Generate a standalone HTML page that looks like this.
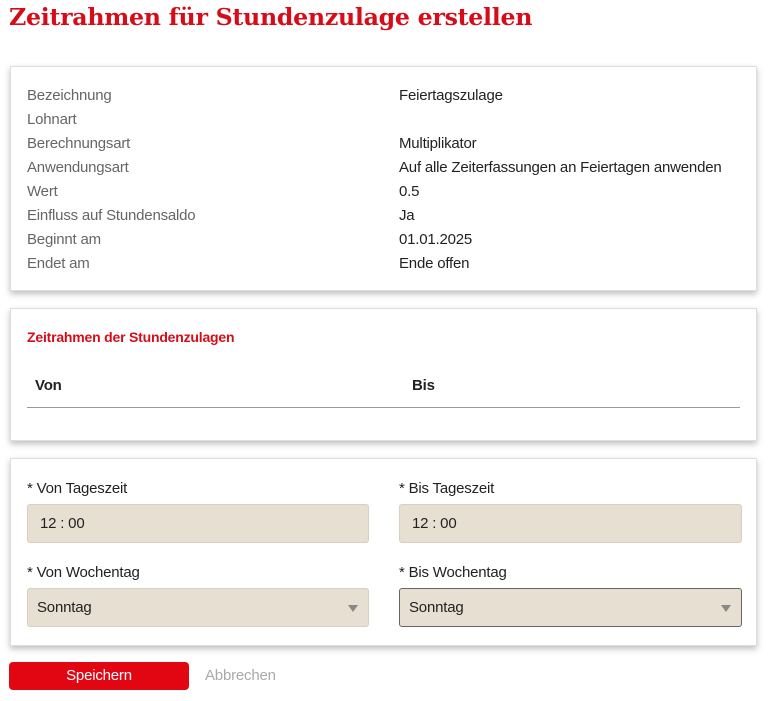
<!DOCTYPE html>
<html><head><meta charset="utf-8"><style>
*{box-sizing:border-box;margin:0;padding:0}
body{width:768px;height:701px;background:#fff;font-family:"Liberation Sans",sans-serif;font-size:15px;letter-spacing:-0.2px;color:#222;position:relative;overflow:hidden}
h1{position:absolute;left:9px;top:3px;font-family:"DejaVu Serif","Liberation Serif",serif;font-weight:bold;color:#d70c19;font-size:23.7px;letter-spacing:-0.3px;white-space:nowrap}
.card{position:absolute;left:10px;width:747px;background:#fff;border:1px solid #ddd;box-shadow:0 3px 6px rgba(0,0,0,.25)}
.row{position:absolute;left:16px;height:24px;line-height:24px;color:#666;width:720px;white-space:nowrap}
.row span{position:absolute;left:372px;color:#222}
.lbl{position:absolute;color:#222}
.in{position:absolute;height:39px;background:#e7dfd2;border:1px solid #d6cfc2;border-radius:3px;line-height:37px;color:#222}
.arrow{position:absolute;right:10px;top:16px;width:0;height:0;border-left:5px solid transparent;border-right:5px solid transparent;border-top:7px solid #888}
</style></head><body>
<h1>Zeitrahmen für Stundenzulage erstellen</h1>
<div class="card" style="top:66px;height:225px">
<div class="row" style="top:17px">Bezeichnung<span>Feiertagszulage</span></div>
<div class="row" style="top:41px">Lohnart</div>
<div class="row" style="top:65px">Berechnungsart<span>Multiplikator</span></div>
<div class="row" style="top:89px">Anwendungsart<span>Auf alle Zeiterfassungen an Feiertagen anwenden</span></div>
<div class="row" style="top:113px">Wert<span>0.5</span></div>
<div class="row" style="top:137px">Einfluss auf Stundensaldo<span>Ja</span></div>
<div class="row" style="top:161px">Beginnt am<span>01.01.2025</span></div>
<div class="row" style="top:185px">Endet am<span>Ende offen</span></div>
</div>
<div class="card" style="top:308px;height:133px">
<div style="position:absolute;left:16px;top:20px;color:#d70c19;font-weight:bold;font-size:14px">Zeitrahmen der Stundenzulagen</div>
<div style="position:absolute;left:24px;top:68px;font-weight:bold">Von</div>
<div style="position:absolute;left:401px;top:68px;font-weight:bold">Bis</div>
<div style="position:absolute;left:16px;right:16px;top:98px;border-top:1px solid #999"></div>
</div>
<div class="card" style="top:458px;height:188px">
<div class="lbl" style="left:16px;top:21px">* Von Tageszeit</div>
<div class="lbl" style="left:388px;top:21px">* Bis Tageszeit</div>
<div class="in" style="left:16px;top:45px;width:342px;padding-left:12px">12 : 00</div>
<div class="in" style="left:388px;top:45px;width:343px;padding-left:12px">12 : 00</div>
<div class="lbl" style="left:16px;top:105px">* Von Wochentag</div>
<div class="lbl" style="left:388px;top:105px">* Bis Wochentag</div>
<div class="in" style="left:16px;top:129px;width:342px;padding-left:9px">Sonntag<div class="arrow"></div></div>
<div class="in" style="left:388px;top:129px;width:343px;padding-left:9px;border-color:#666">Sonntag<div class="arrow"></div></div>
</div>
<div style="position:absolute;left:9px;top:662px;width:180px;height:28px;background:#e20613;border-radius:4px;color:#fff;text-align:center;line-height:28px">Speichern</div>
<div style="position:absolute;left:205px;top:662px;line-height:28px;color:#aaa">Abbrechen</div>
</body></html>
